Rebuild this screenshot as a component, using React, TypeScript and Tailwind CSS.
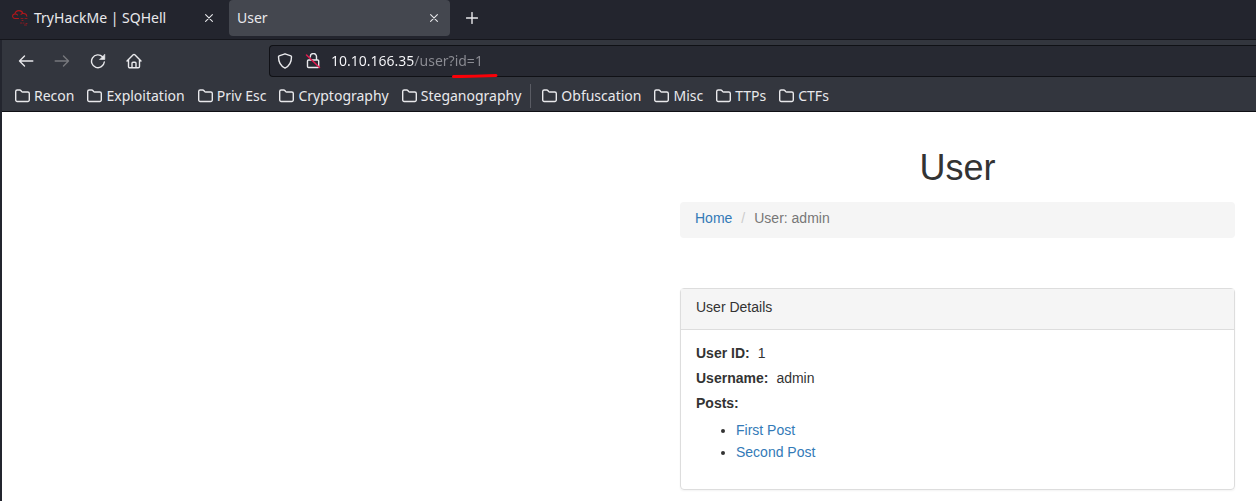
import type { ReactNode } from "react";

const iconProps = {
  fill: "none",
  stroke: "currentColor",
  strokeWidth: 1.4,
  strokeLinecap: "round",
  strokeLinejoin: "round",
  "aria-hidden": true,
} as const;

function CloseIcon() {
  return (
    <svg className="size-2" viewBox="0 0 8 8" {...iconProps} strokeWidth={1.1}>
      <path d="M.6.6l6.8 6.8M7.4.6L.6 7.4" />
    </svg>
  );
}

function CloudLogo() {
  return (
    <svg className="size-4 shrink-0 text-[#b3171c]" viewBox="0 0 16 16" {...iconProps} strokeWidth={1.1}>
      <path d="M6.5 8.500H3A2.300 2.300 0 0 1 .6 6.300C.6 5 1.500 4.100 2.800 4 3.300 1.800 4.900.6 7 .6c2 0 3.400 1.200 3.900 2.900 2.200-.2 3.700 1 3.900 2.700" />
      <path d="M3 4c1.200-.2 2 .2 2.500 1M11 3.500c-.9 0-1.500.3-2 .9" />
      <path d="M9 8.500h2M13 8.500h2M10 10.500h1M8.500 13h1.500M11.500 13h.5M12.500 15h2M14 13.500h1" opacity=".7" />
    </svg>
  );
}

function FolderIcon() {
  return (
    <svg className="h-[14px] w-[15px] shrink-0" viewBox="0 0 15 14" {...iconProps}>
      <path d="M.7 11V2.500A1.500 1.500 0 0 1 2.200 1h2.500c.6 0 .9.200 1.300.7l.6.800c.3.300.5.500 1 .5h5.200a1.500 1.500 0 0 1 1.500 1.500V11a1.500 1.500 0 0 1-1.500 1.500H2.200A1.500 1.500 0 0 1 .7 11z" />
    </svg>
  );
}

function Bookmark({ label }: { label: string }) {
  return (
    <a href="#" className="flex items-center gap-1 whitespace-nowrap">
      <FolderIcon />
      {label}
    </a>
  );
}

function ToolButton({ label, disabled, children }: { label: string; disabled?: boolean; children: ReactNode }) {
  return (
    <button type="button" aria-label={label} disabled={disabled} className="grid size-4 place-items-center disabled:text-[#77787d]">
      <svg className="size-4" viewBox="0 0 16 16" {...iconProps}>
        {children}
      </svg>
    </button>
  );
}

function TabStrip() {
  return (
    <div className="flex h-10 items-start border-b border-[#15161c] bg-[#23252e]">
      <div className="flex h-9 w-[229px] shrink-0 items-center gap-1.5 pr-4 pl-3">
        <CloudLogo />
        <span className="flex-1 whitespace-nowrap">TryHackMe | SQHell</span>
        <button type="button" aria-label="Close TryHackMe tab">
          <CloseIcon />
        </button>
      </div>
      <div className="flex h-9 w-[221px] shrink-0 items-center rounded bg-[#44474f] pr-3 pl-2">
        <span className="flex-1">User</span>
        <button type="button" aria-label="Close User tab">
          <CloseIcon />
        </button>
      </div>
      <button type="button" aria-label="New tab" className="ml-4 grid h-9 w-3 place-items-center">
        <svg className="size-3" viewBox="0 0 12 12" {...iconProps}>
          <path d="M6 .6v10.800M.6 6h10.800" />
        </svg>
      </button>
    </div>
  );
}

function Toolbar() {
  return (
    <div className="flex h-[41px] items-center bg-[#33363e] pl-4">
      <div className="flex w-[251px] shrink-0 gap-5">
        <ToolButton label="Back">
          <path d="M14.800 8H1.500M6.500 3L1.500 8l5 5" />
        </ToolButton>
        <ToolButton label="Forward" disabled>
          <path d="M1.200 8h13.300M9.500 3l5 5-5 5" />
        </ToolButton>
        <ToolButton label="Reload">
          <path d="M14.300 9A6.400 6.400 0 1 1 12.500 3.800" />
          <path d="M14.800 1.500v5h-5z" fill="currentColor" strokeWidth=".6" />
        </ToolButton>
        <ToolButton label="Home">
          <path d="M1 8l6.200-6.300a1.100 1.100 0 0 1 1.600 0L15 8M2.500 7v6.500a1.300 1.300 0 0 0 1.300 1.300h8.400a1.300 1.300 0 0 0 1.300-1.300V7M6 14.500V10.200a1 1 0 0 1 1-1h2a1 1 0 0 1 1 1v4.300" />
        </ToolButton>
      </div>
      <div className="relative flex h-8 flex-1 items-center rounded-l border border-r-0 border-[#101116] bg-[#272932] pl-[7px]">
        <svg className="size-4 shrink-0" viewBox="0 0 16 16" {...iconProps}>
          <path d="M8 .8L13.900 2.900c.4.200.6.500.6.900 0 5-1.600 9-6.500 11.300C3.100 12.800 1.500 8.800 1.500 3.800c0-.4.200-.7.600-.9z" />
        </svg>
        <svg className="ml-3 size-4 shrink-0" viewBox="0 0 16 16" {...iconProps}>
          <path d="M5.300 4V3.600a3.100 3.100 0 0 1 6.200 0V7M3.600 7h9a1.100 1.100 0 0 1 1.100 1.100v5.300a1.100 1.100 0 0 1-1.100 1.100h-9a1.100 1.100 0 0 1-1.100-1.100V8.100A1.100 1.100 0 0 1 3.600 7z" />
          <path d="M1.500 2L14.500 14.500" stroke="#e31b50" strokeWidth="1.500" />
        </svg>
        <input
          type="text"
          aria-label="Address"
          defaultValue="10.10.166.35/user?id=1"
          className="ml-[10px] h-6 min-w-0 flex-1 bg-[linear-gradient(to_right,#fbfbfe_83px,#8c8d94_83px)] bg-clip-text text-transparent caret-white outline-none"
        />
        <svg className="absolute top-[28px] left-[182px] h-1 w-[46px]" viewBox="0 0 46 4" aria-hidden="true">
          <path d="M1.500 2.600Q23 2.400 44 1.500" fill="none" stroke="#fb0007" strokeWidth="3" strokeLinecap="round" />
        </svg>
      </div>
    </div>
  );
}

function BookmarksBar() {
  return (
    <nav aria-label="Bookmarks" className="flex h-[31px] items-center gap-[13px] border-b border-[#0f1015] bg-[#33363e] pl-[13px]">
      {["Recon", "Exploitation", "Priv Esc", "Cryptography", "Steganography"].map((label) => (
        <Bookmark key={label} label={label} />
      ))}
      <span className="-mr-0.5 -ml-1 h-6 w-px bg-[#5a5c64]" />
      {["Obfuscation", "Misc", "TTPs", "CTFs"].map((label) => (
        <Bookmark key={label} label={label} />
      ))}
    </nav>
  );
}

function Page() {
  return (
    <main className="flex-1 bg-white pt-9 pr-[21px] pb-[11px] font-['Liberation_Sans',Arial,sans-serif] text-sm leading-5 text-[#333]">
      <div className="ml-auto w-full max-w-[555px]">
        <h1 className="text-center text-4xl leading-10">User</h1>
        <nav aria-label="Breadcrumb" className="mt-[14px] flex h-9 gap-2 rounded bg-[#f5f5f5] px-[15px] pt-1.5">
          <a href="#" className="text-[#337ab7]">Home</a>
          <span className="px-px text-[#ccc]">/</span>
          <span className="text-[#777]">User: admin</span>
        </nav>
        <section className="mt-[50px] rounded border border-[#ddd] shadow-xs">
          <h2 className="h-[41px] border-b border-[#ddd] bg-[#f5f5f5] px-[15px] pt-2">User Details</h2>
          <div className="px-[15px] pt-[11px] pb-[26px] leading-[25px]">
            <p><strong className="mr-2">User ID:</strong>1</p>
            <p><strong className="mr-2">Username:</strong>admin</p>
            <p><strong>Posts:</strong></p>
            <ul className="mt-[3px] list-disc pl-10 leading-[22px]">
              <li><a href="#" className="text-[#337ab7]">First Post</a></li>
              <li><a href="#" className="text-[#337ab7]">Second Post</a></li>
            </ul>
          </div>
        </section>
      </div>
    </main>
  );
}

export default function App() {
  return (
    <div className="flex min-h-screen flex-col bg-[#23252e] font-['Noto_Sans',sans-serif] text-sm text-[#e9e9ec]">
      <TabStrip />
      <div className="flex flex-1 flex-col pl-0.5">
        <Toolbar />
        <BookmarksBar />
        <Page />
      </div>
    </div>
  );
}
